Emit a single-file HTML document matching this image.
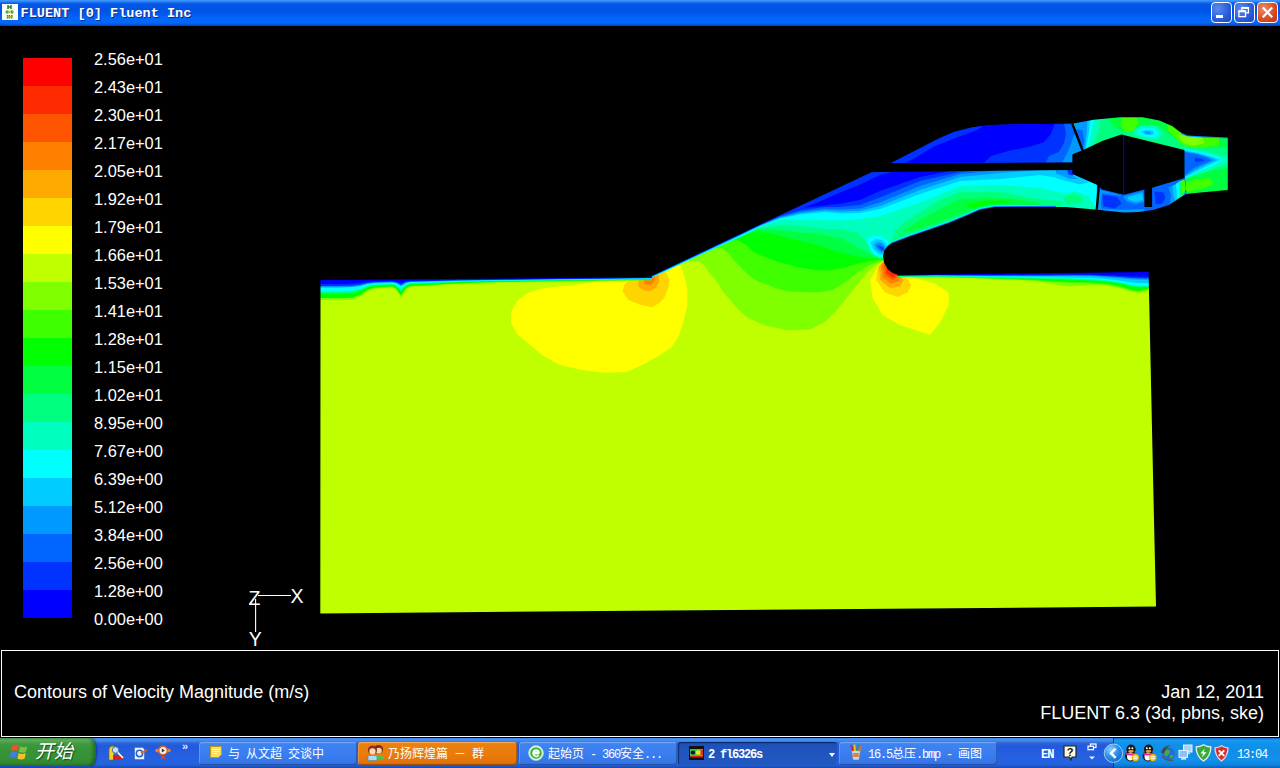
<!DOCTYPE html>
<html lang="zh">
<head>
<meta charset="utf-8">
<title>FLUENT [0] Fluent Inc</title>
<style>
html,body{margin:0;padding:0;background:#000;}
body{width:1280px;height:768px;position:relative;overflow:hidden;font-family:"Liberation Sans","Noto Sans CJK SC",sans-serif;}
.abs{position:absolute;}
#titlebar{left:0;top:0;width:1280px;height:26px;background:linear-gradient(to bottom,#3e96ff 0px,#3a90fc 1px,#1a6eee 2.5px,#0457e6 4px,#0054e3 9px,#0059ec 14px,#0365f8 17.5px,#0468fa 22px,#0560ee 24px,#0a4ccc 25px,#0a3caa 26px);}
#title{left:20.6px;top:6px;font:bold 13.55px/15px "Liberation Mono",monospace;color:#fff;white-space:pre;text-shadow:1px 1px 0 #0a2a8a;}
.tb{top:2px;width:19px;height:19px;border:1px solid #fff;border-radius:4px;background:radial-gradient(circle at 30% 30%,#5a8cf0,#2a5bd8 60%,#1c46c0);}
#bclose{background:radial-gradient(circle at 30% 30%,#f08a6a,#d84a20 60%,#c03410);}
#main{left:0;top:26px;width:1280px;height:712px;background:#000;}
.lg{left:23px;width:49px;height:28px;}
.lt{left:94px;color:#fff;font:16.4px/16px "Liberation Sans",sans-serif;white-space:pre;}
#capframe{left:1px;top:650px;width:1276px;height:85px;border:1px solid #fff;}
.cap{color:#fff;font:18px/20px "Liberation Sans",sans-serif;white-space:pre;}
#taskbar{left:0;top:738px;width:1280px;height:30px;background:linear-gradient(to bottom,#3a7ee6 0px,#4691f0 1.5px,#3f86ea 3px,#2a62d8 5.5px,#2458dc 8px,#255fe0 16px,#2463e0 26px,#2058cc 28px,#1b46a8 30px);}

#start{left:0;top:738px;width:96px;height:28px;border-radius:0 5px 5px 0 / 0 14px 14px 0;background:linear-gradient(to bottom,#4c9e4c 0px,#62b062 2px,#4aa24a 4px,#3c983c 7px,#369336 13px,#389238 20px,#2f882f 25px,#2a7a2a 28px);box-shadow:1px 0 2px rgba(0,0,60,.45), inset -3px 0 3px rgba(0,50,0,.35);}
#starttxt{left:35px;top:741px;color:#fff;font:italic 19px/22px "Liberation Sans","Noto Sans CJK SC",sans-serif;letter-spacing:0px;text-shadow:1px 1px 1px rgba(0,0,0,.5);white-space:pre;}
.tbtn{top:742px;height:23px;width:158px;border-radius:3px;background:linear-gradient(to bottom,#5b97f5 0px,#3f83f2 2px,#3a7df0 12px,#3677e8 20px,#2e6ad6 23px);box-shadow:inset 1px 1px 0 rgba(255,255,255,.18), inset -1px -1px 0 rgba(0,0,40,.25);}
.tbtn.or{background:linear-gradient(to bottom,#f39a3c 0px,#ec810f 2px,#e97c0c 12px,#e27408 20px,#cf6604 23px);}
.tbtn.dn{background:linear-gradient(to bottom,#1a47a6 0px,#1e52b8 3px,#2056bd 12px,#2259c2 23px);box-shadow:inset 1px 1px 1px rgba(0,0,40,.5);}
.ttxt{top:748px;color:#fff;font:12px/14px "Liberation Mono","Noto Sans CJK SC",monospace;white-space:pre;letter-spacing:-1.2px;}
.ttxt b{font-weight:normal;letter-spacing:0;line-height:8px;position:relative;top:0px;font-family:"Liberation Sans","Noto Sans CJK SC",sans-serif;}
#tray{left:1113px;top:738px;width:167px;height:30px;background:linear-gradient(to bottom,#0c6ad0 0px,#1a9df0 2px,#1192ea 5px,#0f8de8 14px,#1290ea 22px,#0e82dc 27px,#0a5cb8 30px);border-left:1px solid #0a3c90;}
</style>
</head>
<body>
<div id="main" class="abs"></div>

<!-- TITLE BAR -->
<div id="titlebar" class="abs"></div>
<div id="title" class="abs">FLUENT [0] Fluent Inc</div>
<svg class="abs" style="left:2px;top:4px" width="16" height="16" viewBox="0 0 16 16">
 <rect width="16" height="16" fill="#fbfdf6"/>
 <path d="M6,1 V5 M9,1 V5 M6,3 H9" stroke="#2a8a2a" stroke-width="1.6" fill="none"/>
 <circle cx="5.2" cy="8" r="1.7" fill="#58a838"/><circle cx="10" cy="8" r="1.7" fill="#58a838"/><rect x="6.5" y="6.6" width="2.4" height="2.6" fill="#c8c040"/>
 <path d="M5.5,11 V14.6 M7.5,11 V14.6 M9.8,11 V14.6" stroke="#3a9030" stroke-width="1.5"/>
 <path d="M5,12.6 H10.6" stroke="#b0b030" stroke-width="1"/>
</svg>
<div class="abs tb" id="bmin" style="left:1211px"></div>
<div class="abs" style="left:1216px;top:15px;width:7px;height:3px;background:#fff"></div>
<div class="abs tb" id="bmax" style="left:1234px"></div>
<svg class="abs" style="left:1237px;top:6px" width="14" height="13" viewBox="0 0 14 13">
 <path d="M4.8,4.2 V1.6 H11.4 V6.8 H8.6" fill="none" stroke="#fff" stroke-width="1.3"/>
 <path d="M4.8,1.9 H11.4" stroke="#fff" stroke-width="1.9"/>
 <rect x="1.9" y="5" width="6.6" height="5.6" fill="none" stroke="#fff" stroke-width="1.3"/>
 <path d="M1.9,5.3 H8.5" stroke="#fff" stroke-width="1.9"/>
</svg>
<div class="abs tb" id="bclose" style="left:1257px"></div>
<svg class="abs" style="left:1261px;top:6px" width="13" height="13" viewBox="0 0 13 13">
 <path d="M1.8,1.4 L11.2,11.2 M11.2,1.4 L1.8,11.2" stroke="#fff" stroke-width="2.1"/>
</svg>

<!-- LEGEND -->
<div id="legend">
<div class="abs lg" style="top:58px;background:#ff0000"></div>
<div class="abs lg" style="top:86px;background:#ff2b00"></div>
<div class="abs lg" style="top:114px;background:#ff5500"></div>
<div class="abs lg" style="top:142px;background:#ff8000"></div>
<div class="abs lg" style="top:170px;background:#ffaa00"></div>
<div class="abs lg" style="top:198px;background:#ffd500"></div>
<div class="abs lg" style="top:226px;background:#ffff00"></div>
<div class="abs lg" style="top:254px;background:#bfff00"></div>
<div class="abs lg" style="top:282px;background:#80ff00"></div>
<div class="abs lg" style="top:310px;background:#40ff00"></div>
<div class="abs lg" style="top:338px;background:#00ff00"></div>
<div class="abs lg" style="top:366px;background:#00ff40"></div>
<div class="abs lg" style="top:394px;background:#00ff80"></div>
<div class="abs lg" style="top:422px;background:#00ffbf"></div>
<div class="abs lg" style="top:450px;background:#00ffff"></div>
<div class="abs lg" style="top:478px;background:#00ccff"></div>
<div class="abs lg" style="top:506px;background:#0099ff"></div>
<div class="abs lg" style="top:534px;background:#0066ff"></div>
<div class="abs lg" style="top:562px;background:#0033ff"></div>
<div class="abs lg" style="top:590px;background:#0000ff"></div>
<div class="abs lt" style="top:51px">2.56e+01</div>
<div class="abs lt" style="top:79px">2.43e+01</div>
<div class="abs lt" style="top:107px">2.30e+01</div>
<div class="abs lt" style="top:135px">2.17e+01</div>
<div class="abs lt" style="top:163px">2.05e+01</div>
<div class="abs lt" style="top:191px">1.92e+01</div>
<div class="abs lt" style="top:219px">1.79e+01</div>
<div class="abs lt" style="top:247px">1.66e+01</div>
<div class="abs lt" style="top:275px">1.53e+01</div>
<div class="abs lt" style="top:303px">1.41e+01</div>
<div class="abs lt" style="top:331px">1.28e+01</div>
<div class="abs lt" style="top:359px">1.15e+01</div>
<div class="abs lt" style="top:387px">1.02e+01</div>
<div class="abs lt" style="top:415px">8.95e+00</div>
<div class="abs lt" style="top:443px">7.67e+00</div>
<div class="abs lt" style="top:471px">6.39e+00</div>
<div class="abs lt" style="top:499px">5.12e+00</div>
<div class="abs lt" style="top:527px">3.84e+00</div>
<div class="abs lt" style="top:555px">2.56e+00</div>
<div class="abs lt" style="top:583px">1.28e+00</div>
<div class="abs lt" style="top:611px">0.00e+00</div>
</div>

<!-- PLOT -->
<svg id="plot" class="abs" style="left:0;top:26px" width="1280" height="624" viewBox="0 26 1280 624">
<!--PLOT_START-->
<defs><clipPath id="cpOuter"><polygon points="320.5,280.0 648.8,277.2 891.0,162.9 938.8,138.4 953.8,131.9 972.5,127.2 991.2,124.9 1010.0,124.4 1072.0,123.8 1093.8,119.7 1120.0,117.2 1142.5,117.2 1159.4,120.6 1172.5,126.2 1180.0,131.9 1187.5,135.6 1206.0,136.6 1227.8,137.5 1227.8,190.0 1206.0,191.9 1187.5,193.8 1180.0,197.5 1168.8,205.0 1153.8,209.7 1138.8,212.1 1123.8,212.5 1097.5,209.7 1066.0,206.9 995.0,206.9 980.0,209.7 967.5,215.2 948.8,222.9 930.0,229.4 911.0,236.0 892.5,243.0 887.5,246.0 884.3,250.5 883.0,256.0 884.2,263.0 888.0,269.5 893.0,273.3 899.0,275.0 1148.6,272.0 1154.0,520.0 1156.0,606.5 320.3,613.4"/></clipPath><filter id="soft" x="-5%" y="-5%" width="110%" height="110%"><feGaussianBlur stdDeviation="0.7"/></filter></defs>
<g clip-path="url(#cpOuter)"><g filter="url(#soft)">
<polygon fill="#bfff00" points="300.0,100.0 1260.0,100.0 1260.0,630.0 300.0,630.0" />
<polygon fill="#ffff00" points="612.0,278.0 600.0,280.8 577.5,284.5 552.5,287.0 540.0,289.0 527.5,293.0 517.5,300.6 511.0,312.0 511.0,323.0 517.5,334.4 528.8,343.8 542.0,355.0 558.8,364.4 581.3,370.0 603.8,372.8 626.3,371.9 643.0,364.4 660.0,355.0 671.3,347.5 678.8,336.3 683.4,321.3 687.2,306.3 687.5,291.3 685.0,278.0 681.0,266.0 670.0,262.0 649.0,270.0" />
<polygon fill="#ffd500" points="649.7,276.3 630.0,280.0 624.4,284.7 622.5,291.3 628.1,299.7 639.4,304.4 652.5,307.2 660.0,302.5 664.7,296.9 668.4,287.5 669.4,280.0 666.6,273.4 660.0,268.8" />
<polygon fill="#ffaa00" points="649.7,276.3 638.4,280.0 638.4,286.6 643.1,290.3 650.6,290.9 656.3,287.5 659.1,281.9 659.1,275.3 654.4,272.5" />
<polygon fill="#ff8000" points="649.7,276.3 643.5,279.1 645.0,283.8 649.7,285.3 653.4,282.8 655.3,278.1 654.4,274.0" />
<polygon fill="#80ff00" points="690.0,262.0 698.8,261.2 705.0,266.2 710.0,273.8 717.5,282.5 722.5,291.2 730.0,300.0 738.8,310.0 748.0,318.0 765.0,325.6 787.5,330.3 810.0,329.4 825.0,321.9 836.0,311.0 845.0,300.0 855.0,287.5 865.0,275.0 872.5,267.5 880.0,262.5 884.0,261.0 900.0,262.0 1000.0,250.0 1110.0,240.0 1110.0,90.0 640.0,90.0" />
<polygon fill="#40ff00" points="715.0,248.0 722.5,248.8 727.5,252.5 735.0,261.2 742.5,268.8 750.0,276.2 757.5,281.2 767.5,285.0 777.5,288.8 787.5,291.2 800.0,292.0 817.5,292.5 832.5,290.0 845.0,282.5 857.5,272.5 870.0,265.0 880.0,261.2 884.0,260.5 900.0,261.0 1000.0,250.0 1110.0,240.0 1110.0,90.0 640.0,90.0" />
<polygon fill="#00ff00" points="732.0,240.0 738.8,240.6 746.2,245.0 752.5,251.2 760.0,255.0 770.0,258.8 780.0,262.5 790.0,265.0 800.0,267.5 815.0,270.0 830.0,270.6 845.0,267.5 860.0,263.0 872.5,260.6 881.0,259.8 884.0,259.6 900.0,260.0 1000.0,250.0 1110.0,240.0 1110.0,90.0 640.0,90.0" />
<polygon fill="#00ff40" points="745.0,233.5 755.0,232.0 765.0,232.5 772.5,234.0 780.0,236.0 790.0,238.5 800.0,241.0 817.5,245.0 836.0,251.2 855.0,256.2 870.0,258.0 880.0,258.8 884.0,259.0 900.0,259.0 1000.0,250.0 1110.0,240.0 1110.0,90.0 640.0,90.0" />
<polygon fill="#00ff80" points="750.0,229.0 760.0,229.0 770.0,229.0 780.0,230.0 790.0,231.5 800.0,232.5 817.5,233.8 842.5,238.8 860.0,248.8 872.5,255.0 880.0,257.5 884.0,258.0 900.0,258.0 1000.0,250.0 1110.0,240.0 1110.0,90.0 640.0,90.0" />
<polygon fill="#00ffbf" points="649.0,279.1 700.0,255.3 740.0,237.6 760.0,228.0 780.0,225.0 800.0,226.0 825.0,229.0 840.0,229.0 858.0,233.0 868.0,243.0 876.0,252.0 883.0,256.0 888.0,247.0 895.0,233.0 905.0,222.0 920.0,212.5 940.0,200.0 960.0,192.0 1000.0,192.0 1040.0,199.0 1072.0,203.0 1100.0,206.0 1110.0,240.0 1110.0,90.0 640.0,90.0" />
<polygon fill="#00ffff" points="649.0,278.6 700.0,254.7 740.0,236.5 760.0,226.5 780.0,220.0 800.0,220.0 825.0,220.0 840.0,220.5 860.0,219.0 880.0,216.0 920.0,202.5 960.0,186.0 1000.0,185.0 1040.0,188.0 1072.0,195.0 1100.0,200.0 1110.0,240.0 1110.0,90.0 640.0,90.0" />
<polygon fill="#00ccff" points="649.0,278.1 700.0,254.2 740.0,235.6 760.0,225.9 780.0,218.6 800.0,214.5 825.0,212.0 840.0,213.5 860.0,213.0 880.0,209.0 920.0,194.0 960.0,181.0 1000.0,179.0 1040.0,175.0 1072.0,180.0 1100.0,182.0 1110.0,240.0 1110.0,90.0 640.0,90.0" />
<polygon fill="#0099ff" points="649.0,277.9 700.0,254.0 740.0,235.3 760.0,225.6 780.0,217.8 800.0,213.2 825.0,210.5 840.0,211.5 860.0,211.0 880.0,206.0 920.0,190.0 960.0,177.0 1000.0,173.0 1040.0,170.0 1100.0,170.0 1110.0,240.0 1110.0,90.0 640.0,90.0" />
<polygon fill="#0066ff" points="649.0,277.7 700.0,253.8 740.0,235.1 760.0,225.4 780.0,217.0 800.0,212.0 825.0,209.0 840.0,209.5 860.0,208.5 880.0,202.5 920.0,186.0 960.0,174.0 1000.0,170.0 1100.0,169.0 1110.0,240.0 1110.0,90.0 640.0,90.0" />
<polygon fill="#0033ff" points="649.0,277.5 700.0,253.6 740.0,234.8 760.0,225.1 780.0,216.3 800.0,210.5 825.0,207.0 840.0,207.0 860.0,205.0 880.0,197.5 920.0,181.0 960.0,172.0 980.0,170.0 1100.0,168.0 1110.0,240.0 1110.0,90.0 640.0,90.0" />
<polygon fill="#0000ff" points="803.0,208.0 825.0,205.5 840.0,203.8 860.0,200.0 880.0,191.0 920.0,177.0 950.0,171.0 900.0,170.0 880.0,175.0 860.0,184.5 840.0,192.5 815.0,203.5" />
<polygon fill="#00ff80" points="893.0,232.0 905.0,221.0 920.0,212.5 940.0,201.0 960.0,193.0 985.0,195.5 1010.0,196.0 1040.0,200.0 1066.0,204.0 1070.0,206.0 1040.0,206.0 995.0,205.5 980.0,208.0 967.5,212.5 948.8,220.0 930.0,226.5 911.0,233.0" />
<polygon fill="#00ff40" points="901.0,232.0 920.0,220.0 940.0,209.0 960.0,198.5 985.0,198.0 1010.0,198.5 1035.0,202.0 1040.0,205.0 1000.0,204.5 985.0,206.0 967.5,211.0 948.8,218.5 930.0,225.0 912.0,231.0" />
<polygon fill="#00ff00" points="965.0,205.0 985.0,200.5 1005.0,200.5 1012.0,203.0 990.0,204.0 972.0,208.0" />
<polyline fill="none" stroke="#00ffff" stroke-width="3.2" points="884.3,250.5 887.5,246.0 892.5,243.0 911.0,236.0 930.0,229.4 948.8,222.9 967.5,215.2 980.0,209.7 995.0,206.9 1066.0,206.5 1097.5,209.9"/>
<polyline fill="none" stroke="#0066ff" stroke-width="1.4" points="884.3,250.5 887.5,246.0 892.5,243.0 911.0,236.0 930.0,229.4 948.8,222.9 967.5,215.2 980.0,209.7 995.0,206.9 1066.0,206.5 1097.5,209.9"/>
<polygon fill="#00ffff" points="866.0,240.0 873.0,235.5 881.0,236.0 888.0,241.0 889.0,247.0 885.0,256.0 879.0,258.0 871.0,252.0" />
<polygon fill="#00ccff" points="870.5,242.5 876.0,239.0 882.0,240.0 887.0,245.0 886.0,253.0 880.0,255.0 873.5,249.5" />
<polygon fill="#0099ff" points="874.0,244.0 878.5,242.0 883.0,243.5 886.0,248.0 884.5,253.0 880.0,252.0 876.0,248.5" />
<polygon fill="#0066ff" points="876.5,245.5 880.0,244.5 884.0,247.0 884.5,251.5 881.0,250.5 878.0,248.0" />
<polygon fill="#0033ff" points="879.0,247.0 882.0,247.0 884.0,250.0 881.5,249.5" />
<polygon fill="#ffff00" points="883.8,261.2 878.8,265.0 870.0,280.0 872.5,297.5 882.5,315.0 900.0,325.0 930.0,335.0 940.0,322.5 948.8,305.0 948.8,292.5 935.0,283.8 910.0,276.2 897.5,272.5" />
<polygon fill="#ffd500" points="883.8,261.2 877.5,267.5 876.2,280.0 885.0,292.5 897.5,297.0 907.5,292.5 911.2,285.0 907.5,278.8 897.5,272.5" />
<polygon fill="#ffaa00" points="883.8,261.2 878.8,266.2 880.0,280.0 890.0,288.0 900.0,286.2 903.8,280.0 897.5,273.0" />
<polygon fill="#ff8000" points="883.8,261.2 881.2,265.0 882.5,277.5 891.2,283.8 898.8,281.2 900.0,277.5 897.5,273.0" />
<polygon fill="#ff5500" points="885.0,262.5 883.8,265.0 885.0,275.0 892.5,280.0 897.0,277.5 897.5,273.0" />
<polygon fill="#ff2b00" points="886.2,265.0 887.0,273.0 892.5,277.5 896.0,275.8 897.5,273.0" />
<polygon fill="#80ff00" points="318.0,300.0 340.0,300.3 352.0,299.7 360.0,296.7 368.0,290.6 375.0,288.5 392.0,287.4 396.0,289.4 401.0,297.3 406.0,289.3 410.0,286.8 430.0,285.6 460.0,283.8 500.0,282.5 560.0,281.5 652.0,280.2 652.0,270.0 318.0,270.0" />
<polygon fill="#00ff00" points="318.0,298.0 340.0,298.3 352.0,297.7 360.0,295.0 368.0,289.5 375.0,287.6 392.0,286.6 396.0,288.4 401.0,295.5 406.0,288.3 410.0,286.0 430.0,284.9 460.0,283.3 500.0,282.1 560.0,281.1 652.0,279.9 652.0,270.0 318.0,270.0" />
<polygon fill="#00ff80" points="318.0,293.2 340.0,293.4 352.0,292.9 360.0,290.9 368.0,286.9 375.0,285.5 392.0,284.7 396.0,286.0 401.0,291.2 406.0,285.9 410.0,284.2 430.0,283.4 460.0,282.1 500.0,281.1 560.0,280.3 652.0,279.2 652.0,270.0 318.0,270.0" />
<polygon fill="#00ffff" points="318.0,291.2 340.0,291.3 352.0,290.9 360.0,289.2 368.0,285.8 375.0,284.6 392.0,283.9 396.0,285.0 401.0,289.4 406.0,284.9 410.0,283.5 430.0,282.7 460.0,281.6 500.0,280.7 560.0,280.0 652.0,278.9 652.0,270.0 318.0,270.0" />
<polygon fill="#0099ff" points="318.0,287.4 340.0,287.4 352.0,287.1 360.0,286.0 368.0,283.7 375.0,282.9 392.0,282.4 396.0,283.1 401.0,286.0 406.0,283.0 410.0,282.0 430.0,281.5 460.0,280.7 500.0,280.0 560.0,279.3 652.0,278.3 652.0,270.0 318.0,270.0" />
<polygon fill="#0033ff" points="318.0,286.0 340.0,286.0 352.0,285.7 360.0,284.8 368.0,282.9 375.0,282.2 392.0,281.8 396.0,282.4 401.0,284.7 406.0,282.3 410.0,281.5 430.0,281.0 460.0,280.3 500.0,279.7 560.0,279.0 652.0,278.1 652.0,270.0 318.0,270.0" />
<polygon fill="#0000ff" points="318.0,284.0 340.0,283.9 352.0,283.7 360.0,283.1 368.0,281.8 375.0,281.3 392.0,281.0 396.0,281.4 401.0,282.9 406.0,281.3 410.0,280.8 430.0,280.4 460.0,279.8 500.0,279.3 560.0,278.7 652.0,277.8 652.0,270.0 318.0,270.0" />
<polygon fill="#80ff00" points="897.0,276.1 935.0,276.3 985.0,278.6 1020.0,279.7 1035.0,281.0 1050.0,283.8 1070.0,286.5 1090.0,285.3 1107.0,285.5 1120.0,288.0 1132.0,291.6 1139.0,292.7 1145.0,291.0 1150.0,290.0 1150.0,265.0 897.0,265.0" />
<polygon fill="#40ff00" points="897.0,276.4 935.0,276.5 985.0,278.5 1035.0,280.4 1070.0,282.9 1090.0,283.2 1107.0,284.4 1120.0,287.3 1132.0,291.1 1139.0,292.1 1145.0,290.4 1150.0,289.4 1150.0,265.0 897.0,265.0" />
<polygon fill="#00ff00" points="897.0,276.0 935.0,276.0 985.0,277.9 1035.0,279.7 1070.0,282.1 1090.0,282.3 1107.0,283.5 1120.0,286.1 1132.0,289.8 1139.0,290.7 1145.0,289.1 1150.0,288.1 1150.0,265.0 897.0,265.0" />
<polygon fill="#00ff80" points="897.0,277.0 935.0,276.9 985.0,277.9 1035.0,278.7 1070.0,279.8 1090.0,280.5 1107.0,281.8 1120.0,283.6 1132.0,286.4 1139.0,287.1 1150.0,286.9 1150.0,265.0 897.0,265.0" />
<polygon fill="#00ffff" points="897.0,275.8 935.0,275.7 985.0,276.7 1035.0,277.5 1070.0,278.6 1090.0,279.3 1107.0,280.6 1120.0,282.4 1132.0,285.2 1139.0,285.9 1150.0,285.7 1150.0,265.0 897.0,265.0" />
<polygon fill="#00ccff" points="897.0,275.7 935.0,275.5 985.0,276.2 1035.0,276.7 1070.0,277.5 1090.0,278.0 1107.0,279.0 1120.0,280.4 1132.0,282.6 1139.0,283.1 1150.0,283.0 1150.0,265.0 897.0,265.0" />
<polygon fill="#0099ff" points="897.0,275.8 935.0,275.5 985.0,275.9 1035.0,276.0 1070.0,275.8 1090.0,276.1 1107.0,277.2 1120.0,278.3 1132.0,279.4 1145.0,279.8 1150.0,279.8 1150.0,265.0 897.0,265.0" />
<polygon fill="#0033ff" points="897.0,275.5 935.0,275.1 985.0,275.4 1035.0,275.4 1070.0,275.2 1090.0,275.3 1107.0,276.3 1120.0,277.1 1132.0,278.1 1145.0,278.4 1150.0,278.3 1150.0,265.0 897.0,265.0" />
<polygon fill="#0000ff" points="897.0,275.4 935.0,275.0 985.0,275.0 1035.0,274.8 1070.0,274.5 1090.0,274.6 1107.0,275.2 1120.0,275.7 1132.0,276.4 1145.0,276.5 1150.0,276.5 1150.0,265.0 897.0,265.0" />
<polygon fill="#00ffff" points="1060.0,166.9 1100.8,166.9 1100.8,214.7 1060.0,214.7" />
<polygon fill="#00ccff" points="1056.0,166.0 1074.0,166.0 1074.0,174.5 1090.0,182.0 1080.0,184.5 1066.0,181.0 1056.0,178.0" />
<polygon fill="#0099ff" points="1056.0,168.0 1073.0,168.0 1073.0,176.0 1078.0,179.0 1070.0,179.0 1064.0,176.5 1056.0,173.5" />
<polygon fill="#0033ff" points="1066.5,168.0 1073.0,168.0 1073.0,175.5 1068.5,174.5" />
<polygon fill="#00ffbf" points="1056.0,192.5 1065.0,193.0 1076.0,191.5 1088.0,195.5 1093.0,203.0 1097.0,211.0 1056.0,211.0" />
<polygon fill="#00ff80" points="1056.0,201.5 1061.0,201.0 1064.0,204.5 1056.0,207.0" />
<polygon fill="#00ff80" points="1063.0,198.0 1070.0,194.0 1079.0,195.0 1083.5,199.5 1079.0,204.0 1067.0,204.5" />
<polygon fill="#00ff80" points="1073.4,113.4 1231.6,113.4 1231.6,195.0 1180.9,195.0 1180.9,183.8 1158.4,183.8 1102.2,183.8 1073.4,161.3" />
<polygon fill="#00ffbf" points="1073.4,119.1 1100.8,119.1 1098.0,133.1 1092.3,145.8 1081.1,152.8" />
<polygon fill="#00ffff" points="1073.4,119.1 1093.8,119.1 1091.6,133.1 1088.1,147.2 1081.1,152.8" />
<polygon fill="#00ccff" points="1073.4,119.1 1090.2,119.1 1088.8,133.1 1086.0,148.6 1081.1,152.8" />
<polygon fill="#0099ff" points="1073.4,119.1 1087.4,120.5 1086.7,133.1 1084.6,149.3 1081.1,152.8" />
<polygon fill="#0066ff" points="1076.6,128.9 1082.5,130.3 1084.2,140.2 1083.2,148.6 1079.7,145.8" />
<polygon fill="#00ff40" points="1109.2,116.3 1158.4,116.3 1180.9,131.7 1228.0,136.6 1228.0,147.2 1207.7,147.2 1186.6,145.8 1178.1,140.2 1166.9,133.1 1158.4,126.1 1144.4,124.7 1133.1,130.3 1121.9,131.0 1112.0,126.1" />
<polygon fill="#40ff00" points="1121.9,117.0 1135.9,117.0 1138.8,123.3 1133.1,131.0 1124.7,131.7 1120.5,124.7" />
<polygon fill="#40ff00" points="1166.9,123.3 1182.3,133.1 1218.9,136.6 1218.9,145.8 1195.0,147.9 1183.8,145.8 1175.3,138.8 1168.3,130.3" />
<polygon fill="#80ff00" points="1179.5,133.1 1202.0,136.2 1204.8,143.0 1193.6,145.8 1184.5,143.7 1179.5,138.0" />
<polygon fill="#00ffbf" points="1133.1,131.0 1140.2,126.1 1155.6,126.1 1162.7,133.1 1158.4,139.5 1147.2,138.8 1135.9,135.2" />
<polygon fill="#00ffff" points="1136.6,131.7 1142.3,128.2 1154.2,128.2 1159.1,133.1 1155.6,137.6 1147.2,137.1 1138.8,134.5" />
<polygon fill="#00ccff" points="1140.9,131.7 1145.8,130.0 1152.1,130.6 1154.2,133.1 1151.4,135.2 1144.4,134.5" />
<polygon fill="#0099ff" points="1143.7,132.1 1147.2,131.2 1150.7,132.0 1150.0,134.0 1145.8,133.8" />
<polygon fill="#00ffbf" points="1183.8,147.2 1200.6,150.0 1217.5,154.2 1228.0,158.4 1228.0,162.7 1217.5,166.9 1200.6,173.9 1183.8,180.9" />
<polygon fill="#00ffff" points="1183.8,149.3 1200.6,152.1 1214.7,155.6 1225.2,160.1 1214.7,164.8 1200.6,171.1 1183.8,178.8" />
<polygon fill="#00ccff" points="1183.8,150.3 1199.2,153.1 1211.9,156.8 1220.3,160.1 1211.9,163.5 1199.2,169.7 1183.8,177.8" />
<polygon fill="#0099ff" points="1183.8,151.1 1197.8,153.7 1209.1,157.3 1216.1,160.1 1209.1,162.9 1197.8,168.6 1183.8,177.0" />
<polygon fill="#0066ff" points="1183.8,152.1 1195.0,153.8 1206.3,157.3 1211.9,160.1 1206.3,162.7 1195.0,167.6 1183.8,175.7" />
<polygon fill="#0033ff" points="1195.0,157.7 1202.0,159.1 1204.8,160.4 1201.3,161.5 1195.0,162.0" />
<polygon fill="#00ff40" points="1180.9,180.9 1195.0,175.3 1214.7,169.7 1228.0,166.9 1228.0,190.8 1180.9,195.0" />
<polygon fill="#40ff00" points="1182.3,183.8 1195.0,179.5 1209.1,178.1 1214.7,183.8 1200.6,189.4 1183.8,192.2" />
<polygon fill="#00ffbf" points="1221.7,157.0 1228.0,155.6 1228.0,164.8 1221.7,162.7" />
<polyline fill="none" stroke="#0099ff" stroke-width="2" points="1180.9,133.1 1186.6,135.2 1200.6,136.6 1228.0,137.6"/>
<polygon fill="#0066ff" points="1096.8,180.9 1124.7,180.9 1144.4,178.1 1152.8,175.3 1184.5,171.1 1186.6,195.0 1172.5,206.3 1144.4,214.7 1096.8,214.7" />
<polygon fill="#0099ff" points="1098.0,189.4 1106.4,191.5 1121.9,195.7 1113.4,195.0 1102.2,192.9 1100.8,203.4 1102.2,211.9 1096.8,211.9" />
<polygon fill="#0099ff" points="1102.2,208.4 1123.3,209.8 1144.4,209.1 1144.4,213.3 1102.2,213.3" />
<polygon fill="#0033ff" points="1102.2,195.0 1116.3,196.4 1121.9,203.4 1114.8,208.4 1103.6,206.3" />
<polygon fill="#0099ff" points="1123.3,196.4 1143.0,191.1 1144.1,202.0 1135.9,204.1 1126.1,201.3" />
<polygon fill="#00ccff" points="1127.5,197.1 1142.3,192.9 1143.3,199.9 1135.9,202.0 1128.9,199.9" />
<polygon fill="#0033ff" points="1154.5,191.5 1163.4,192.2 1165.5,197.8 1162.0,204.1 1155.6,204.1" />
<polygon fill="#0099ff" points="1168.3,187.3 1176.7,183.8 1179.5,195.0 1174.6,204.1 1169.7,203.4 1171.1,195.0" />
<polygon fill="#00ccff" points="1172.5,185.9 1177.4,183.5 1180.2,195.0 1175.6,203.4 1173.2,195.0" />
<polygon fill="#00ffff" points="1176.0,183.8 1179.5,181.6 1182.3,195.0 1177.4,202.0" />
<polygon fill="#00ff80" points="1178.8,181.6 1182.3,180.2 1185.2,192.2 1180.2,199.2" />
<polygon fill="#40ff00" points="1181.2,180.9 1184.5,179.3 1185.9,189.4 1182.6,195.0" />
</g></g>
<g>
<polygon fill="#000" points="860.0,172.3 860.0,163.0 891.0,163.0 1073.0,162.2 1073.0,169.9" />
<clipPath id="cpUC"><polygon points="891.0,163.0 938.8,138.4 953.8,131.9 972.5,127.2 991.2,124.9 1010.0,124.4 1072.4,123.8 1083.2,150.5 1073.0,154.5 1073.0,162.3"/></clipPath>
<g clip-path="url(#cpUC)"><g filter="url(#soft)">
<polygon fill="#0000ff" points="880.0,115.0 1090.0,115.0 1090.0,170.0 880.0,170.0" />
<polygon fill="#0033ff" points="885.0,163.0 891.0,163.0 938.8,138.4 953.8,131.9 972.5,127.2 985.0,125.3 975.0,131.0 955.0,138.0 935.0,146.0 915.0,158.0 905.0,163.0" />
<polygon fill="#0033ff" points="983.8,163.0 991.0,156.0 1010.0,150.6 1028.8,146.9 1043.8,142.2 1051.0,133.8 1055.0,123.0 1090.0,123.0 1090.0,165.0" />
<polygon fill="#0066ff" points="1045.6,163.0 1049.0,156.0 1058.8,152.0 1064.0,143.0 1066.0,134.0 1064.0,123.0 1090.0,123.0 1090.0,165.0" />
<polygon fill="#0099ff" points="1062.0,163.0 1066.0,155.0 1070.0,147.0 1074.0,135.0 1090.0,135.0 1090.0,165.0" />
</g></g>
<polygon fill="#000" points="1072.4,154.2 1083.2,150.0 1102.2,140.9 1120.5,134.8 1122.6,134.4 1123.6,135.1 1184.5,150.0 1184.5,178.1 1152.1,187.7 1152.1,207.0 1144.4,207.0 1144.4,189.4 1124.7,194.4 1122.6,194.4 1102.2,189.4 1098.0,185.2 1072.4,173.9" />
<line x1="1123.7" y1="135" x2="1123.7" y2="194.5" stroke="#0a0ad0" stroke-width="0.9"/>
<line x1="1072.2" y1="123.2" x2="1083.2" y2="152" stroke="#000" stroke-width="2.4"/>
<line x1="1098.9" y1="185" x2="1096.7" y2="210.5" stroke="#000" stroke-width="2.4"/>
</g>
<!--PLOT_END-->
<g id="triad" fill="#fff" font-family="Liberation Sans, sans-serif" font-size="19.5">
 <line x1="258" y1="595.5" x2="291" y2="595.5" stroke="#fff" stroke-width="1.1"/>
 <line x1="255.6" y1="599" x2="255.6" y2="632" stroke="#fff" stroke-width="1.1"/>
 <text x="248.6" y="605">Z</text>
 <text x="290.6" y="603.2">X</text>
 <text x="248.8" y="646">Y</text>
</g>
</svg>

<!-- CAPTION -->
<div id="capframe" class="abs"></div>
<div class="abs cap" style="left:14px;top:682px">Contours of Velocity Magnitude (m/s)</div>
<div class="abs cap" style="right:16px;top:682px;text-align:right">Jan 12, 2011</div>
<div class="abs cap" style="right:16px;top:703px;text-align:right">FLUENT 6.3 (3d, pbns, ske)</div>

<!-- TASKBAR -->
<div id="taskbar" class="abs"></div>
<div id="tray" class="abs"></div>
<div id="start" class="abs"></div>
<svg class="abs" style="left:10px;top:743px" width="20" height="18" viewBox="0 0 20 18">
 <path d="M2.2,2.6 C4.5,1 6.5,1.2 8.8,2.6 L7.6,8.2 C5.5,7 3.6,6.9 1,8.4 Z" fill="#e8552a"/>
 <path d="M10,3.2 C12.3,4.6 14.6,4.6 17.2,3.2 L16,8.8 C13.6,10.2 11.2,10 8.8,8.8 Z" fill="#7cc043"/>
 <path d="M0.8,9.6 C3.2,8.1 5.2,8.2 7.4,9.4 L6.2,15 C4,13.8 2.2,13.8 -0.4,15.2 Z" fill="#3f7fe0"/>
 <path d="M8.6,10 C11,11.3 13.2,11.3 15.8,10 L14.6,15.6 C12.2,17 9.8,16.8 7.4,15.6 Z" fill="#f4c32c"/>
</svg>
<div id="starttxt" class="abs">开始</div>

<!-- quick launch -->
<svg class="abs" style="left:108px;top:745px" width="18" height="16" viewBox="0 0 18 16">
 <path d="M1,15 V5 Q1,1 5,1 H6 V15 Z" fill="#f0d020" stroke="#8a6a00" stroke-width=".6"/>
 <rect x="5" y="10" width="11" height="5" fill="#d82020"/>
 <circle cx="7.5" cy="5" r="3.2" fill="#bfe4ff" stroke="#5570b0" stroke-width="1"/>
 <path d="M9.8,7.5 L15,13" stroke="#fff" stroke-width="1.8"/>
</svg>
<svg class="abs" style="left:132px;top:745px" width="16" height="16" viewBox="0 0 16 16">
 <path d="M2,2 H11 L13,4 V15 H2 Z" fill="#e8f4ff" stroke="#2a62c8" stroke-width="1.6"/>
 <circle cx="7.5" cy="8.5" r="3.2" fill="none" stroke="#2a62c8" stroke-width="1.5"/>
 <path d="M9,8 L15,5" stroke="#e06020" stroke-width="1.6"/>
</svg>
<svg class="abs" style="left:154px;top:745px" width="18" height="16" viewBox="0 0 18 16">
 <ellipse cx="9" cy="5.5" rx="8" ry="2.6" fill="#f08030"/>
 <circle cx="9" cy="5.5" r="4.2" fill="#f4f4f4" stroke="#e0601c" stroke-width="1.4"/>
 <path d="M7.8,3.6 L11,5.5 L7.8,7.4 Z" fill="#333"/>
 <path d="M6,15 L9,9.5 L12,15 L9,13 Z" fill="#e0501c"/>
</svg>
<div class="abs" style="left:182px;top:740px;color:#dfeaff;font:bold 11px/12px 'Liberation Sans',sans-serif">»</div>

<!-- task buttons -->
<div class="abs tbtn" style="left:199px"></div>
<svg class="abs" style="left:210px;top:746px" width="12" height="12" viewBox="0 0 12 12"><path d="M0.5,0.5 H11.5 V8.5 L8.5,11.5 H0.5 Z" fill="#fbe060" stroke="#c09a10" stroke-width="1"/><path d="M2.5,3.5 H9.5 M2.5,5.5 H9.5 M2.5,7.5 H7" stroke="#fff8d0" stroke-width="1"/></svg>
<div class="abs ttxt" style="left:228px"><b>与</b> <b>从文超</b> <b>交谈中</b></div>

<div class="abs tbtn or" style="left:358px;width:159px"></div>
<svg class="abs" style="left:367px;top:744px" width="18" height="17" viewBox="0 0 18 17">
 <circle cx="11.5" cy="5.5" r="4.6" fill="#7a2a18"/><circle cx="11.8" cy="6.8" r="3" fill="#f6d8b0"/>
 <rect x="9" y="11" width="8" height="4.5" rx="1" fill="#58c048"/>
 <circle cx="5.5" cy="6" r="4.6" fill="#8a3020"/><circle cx="5.5" cy="7.4" r="3.1" fill="#f8dcb8"/>
 <rect x="1" y="11.5" width="9" height="5" rx="1" fill="#a8dcf0" stroke="#4a88b0" stroke-width=".6"/>
</svg>
<div class="abs ttxt" style="left:388px"><b>乃扬辉煌篇</b> <b>－</b> <b>群</b></div>

<div class="abs tbtn" style="left:519px"></div>
<svg class="abs" style="left:528px;top:745px" width="16" height="16" viewBox="0 0 16 16">
 <circle cx="8" cy="8" r="7.4" fill="#e8f4e8" stroke="#b8d8b8" stroke-width=".8"/>
 <circle cx="8" cy="8" r="5.8" fill="#30b838"/>
 <path d="M11.2,8.6 H5.2 A3,3 0 0 0 10.6,10.2 M5.2,7.4 A3,3 0 0 1 11,7.4 Z" fill="none" stroke="#fff" stroke-width="1.6"/>
</svg>
<div class="abs ttxt" style="left:548px"><b>起始页</b> - 360<b>安全</b>...</div>

<div class="abs tbtn dn" style="left:678px;width:159px"></div>
<svg class="abs" style="left:689px;top:746px" width="15" height="14" viewBox="0 0 15 14">
 <rect x="0" y="0" width="15" height="14" fill="#101010"/>
 <rect x="1" y="3" width="13" height="7" fill="#30d030"/>
 <ellipse cx="4" cy="6.5" rx="2.4" ry="2" fill="#101060"/>
 <ellipse cx="9.5" cy="6.5" rx="3" ry="2.2" fill="#f0e020"/>
 <rect x="11.5" y="4" width="2.5" height="5" fill="#e03020"/>
 <rect x="1" y="10" width="13" height="1.5" fill="#d02020"/>
</svg>
<div class="abs ttxt" style="left:708px;font-weight:bold">2 fl6326s</div>
<div class="abs" style="left:829px;top:753px;width:0;height:0;border-left:3.5px solid transparent;border-right:3.5px solid transparent;border-top:4px solid #fff"></div>

<div class="abs tbtn" style="left:839px"></div>
<svg class="abs" style="left:849px;top:744px" width="14" height="17" viewBox="0 0 14 17">
 <path d="M2.5,6 H11.5 L10,16 H4 Z" fill="#c8d8f0" stroke="#7080a8" stroke-width=".7"/>
 <path d="M4,7 L2,1" stroke="#e02020" stroke-width="1.8"/><path d="M6,7 L5.5,0.5" stroke="#f0c020" stroke-width="1.8"/>
 <path d="M8,7 L9,1" stroke="#30a030" stroke-width="1.8"/><path d="M10,7 L12.5,2" stroke="#e07020" stroke-width="1.8"/>
 <path d="M4,9 L10,9 L9.5,13 L4.5,13 Z" fill="#e08030"/>
</svg>
<div class="abs ttxt" style="left:868px">16.5<b>总压</b>.bmp - <b>画图</b></div>

<!-- language bar -->
<div class="abs" style="left:1041px;top:748px;color:#fff;font:bold 12px/14px 'Liberation Mono',monospace;letter-spacing:-1px">EN</div>
<svg class="abs" style="left:1063px;top:745px" width="14" height="16" viewBox="0 0 14 16">
 <path d="M1,1 H13 V12 H9 L8,15 L6.5,12 H1 Z" fill="#fffbe0" stroke="#202020" stroke-width="1.2"/>
 <text x="7" y="10.5" text-anchor="middle" font-family="Liberation Sans, sans-serif" font-weight="bold" font-size="11" fill="#101010">?</text>
</svg>
<svg class="abs" style="left:1087px;top:743px" width="10" height="18" viewBox="0 0 10 18">
 <rect x="3.5" y="1" width="5.5" height="3.5" fill="none" stroke="#fff" stroke-width="1.2"/>
 <rect x="1" y="3.2" width="5.5" height="3.5" fill="#245edb" stroke="#fff" stroke-width="1.2"/>
 <path d="M2,13.6 H8 L5,16.6 Z" fill="#e8f0ff"/>
</svg>

<!-- tray -->
<svg class="abs" style="left:1103px;top:743px" width="21" height="21" viewBox="0 0 21 21">
 <defs><radialGradient id="chv" cx="35%" cy="30%" r="75%"><stop offset="0" stop-color="#8fd0ff"/><stop offset=".55" stop-color="#2a8eea"/><stop offset="1" stop-color="#1566cc"/></radialGradient></defs>
 <circle cx="10.4" cy="10.2" r="9.2" fill="url(#chv)" stroke="#bfe0ff" stroke-width=".8"/>
 <path d="M12.6,5.6 L8,10.2 L12.6,14.8" fill="none" stroke="#fff" stroke-width="2.4" stroke-linejoin="miter"/>
</svg>
<svg class="abs" style="left:1124px;top:744px" width="34" height="18" viewBox="0 0 34 18">
 <g>
  <ellipse cx="7" cy="5.2" rx="4.6" ry="4.6" fill="#181818"/>
  <ellipse cx="6.6" cy="12" rx="5.6" ry="5.4" fill="#181818"/>
  <ellipse cx="6.4" cy="12.6" rx="3.4" ry="4" fill="#fff"/>
  <path d="M2,8.4 Q7,10.6 12,8.4 L12.4,10.6 Q7,12.6 1.6,10.6 Z" fill="#e8208a"/>
  <ellipse cx="7" cy="7.2" rx="2.8" ry="1.2" fill="#f0a020"/>
  <circle cx="5.4" cy="4.2" r="1" fill="#fff"/><circle cx="8.4" cy="4.2" r="1" fill="#fff"/>
  <circle cx="11.4" cy="13.6" r="3.6" fill="#f6c820" stroke="#c08a00" stroke-width=".5"/>
  <path d="M9.4,12.8 H13.4 M9.4,14.6 H13.4" stroke="#fff" stroke-width="1"/>
 </g><g transform="translate(17.5,0)">
  <ellipse cx="7" cy="5.2" rx="4.6" ry="4.6" fill="#181818"/>
  <ellipse cx="6.6" cy="12" rx="5.6" ry="5.4" fill="#181818"/>
  <ellipse cx="6.4" cy="12.6" rx="3.4" ry="4" fill="#fff"/>
  <path d="M2,8.4 Q7,10.6 12,8.4 L12.4,10.6 Q7,12.6 1.6,10.6 Z" fill="#e8208a"/>
  <ellipse cx="7" cy="7.2" rx="2.8" ry="1.2" fill="#f0a020"/>
  <circle cx="5.4" cy="4.2" r="1" fill="#fff"/><circle cx="8.4" cy="4.2" r="1" fill="#fff"/>
  <circle cx="11.4" cy="13.6" r="3.6" fill="#f6c820" stroke="#c08a00" stroke-width=".5"/>
  <path d="M9.4,12.8 H13.4 M9.4,14.6 H13.4" stroke="#fff" stroke-width="1"/>
 </g>
</svg>
<svg class="abs" style="left:1160px;top:744px" width="16" height="18" viewBox="0 0 16 18">
 <circle cx="8.6" cy="10" r="6.4" fill="#2a6ad0"/>
 <path d="M4,8 Q6,5 9,6 Q11,8 9,10 Q7,13 5,12 Z M10,11 Q13,10 13.5,12 Q12,15 10,14 Z" fill="#38b048"/>
 <path d="M1,9 Q2,2 11,1.2 Q5,4 4.5,9 Z" fill="#404848"/>
 <path d="M2,12 Q5,17 13,16.4" stroke="#505858" stroke-width="1.4" fill="none"/>
</svg>
<svg class="abs" style="left:1178px;top:744px" width="15" height="18" viewBox="0 0 15 18">
 <rect x="5.5" y="1" width="8.5" height="7" fill="#a8d4f4" stroke="#e8f4ff" stroke-width="1"/>
 <rect x="8" y="8.6" width="4" height="1.6" fill="#d0d8e0"/>
 <rect x="1" y="6.4" width="8.5" height="7" fill="#8cc4f0" stroke="#e8f4ff" stroke-width="1"/>
 <rect x="3" y="14" width="5" height="1.8" fill="#d0d8e0"/>
</svg>
<svg class="abs" style="left:1195px;top:744px" width="17" height="18" viewBox="0 0 17 18">
 <path d="M8.5,0.8 Q12,3 15.8,3 Q16,12 8.5,17 Q1,12 1.2,3 Q5,3 8.5,0.8 Z" fill="#38a838" stroke="#e8f0e8" stroke-width="1.3"/>
 <path d="M9.8,4.6 L5.4,9.6 H8.2 L6.8,13.6 L11.6,8.2 H8.6 Z" fill="#fff"/>
</svg>
<svg class="abs" style="left:1214px;top:745px" width="15" height="17" viewBox="0 0 15 17">
 <path d="M7.5,0.8 Q10.6,2.8 14,2.8 Q14.2,11 7.5,16 Q0.8,11 1,2.8 Q4.4,2.8 7.5,0.8 Z" fill="#d83030" stroke="#d8d8e0" stroke-width="1.3"/>
 <path d="M4.8,5.4 L10.2,10.8 M10.2,5.4 L4.8,10.8" stroke="#fff" stroke-width="1.9"/>
</svg>
<div class="abs" style="left:1237px;top:748px;color:#fff;font:12px/14px 'Liberation Mono',monospace;letter-spacing:-1.2px">13:04</div>

</body>
</html>
